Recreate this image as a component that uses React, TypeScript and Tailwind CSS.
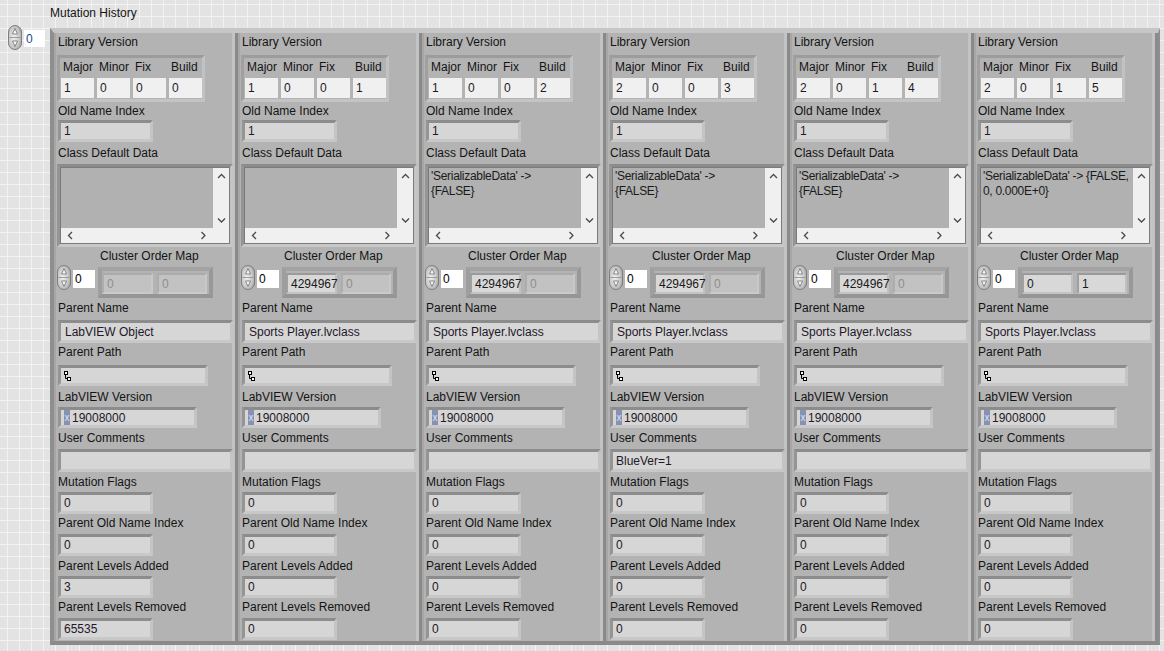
import React from 'react';

type Elem = { v: string; on: boolean };
type Entry = {
  ver: string[];
  data: string[];
  com: Elem[];
  parent: string;
  comments: string;
  added: string;
  removed: string;
};

const ENTRIES: Entry[] = [
  { ver: ['1', '0', '0', '0'], data: [], com: [{ v: '0', on: false }, { v: '0', on: false }], parent: 'LabVIEW Object', comments: '', added: '3', removed: '65535' },
  { ver: ['1', '0', '0', '1'], data: [], com: [{ v: '4294967', on: true }, { v: '0', on: false }], parent: 'Sports Player.lvclass', comments: '', added: '0', removed: '0' },
  { ver: ['1', '0', '0', '2'], data: ["'SerializableData' ->", '{FALSE}'], com: [{ v: '4294967', on: true }, { v: '0', on: false }], parent: 'Sports Player.lvclass', comments: '', added: '0', removed: '0' },
  { ver: ['2', '0', '0', '3'], data: ["'SerializableData' ->", '{FALSE}'], com: [{ v: '4294967', on: true }, { v: '0', on: false }], parent: 'Sports Player.lvclass', comments: 'BlueVer=1', added: '0', removed: '0' },
  { ver: ['2', '0', '1', '4'], data: ["'SerializableData' ->", '{FALSE}'], com: [{ v: '4294967', on: true }, { v: '0', on: false }], parent: 'Sports Player.lvclass', comments: '', added: '0', removed: '0' },
  { ver: ['2', '0', '1', '5'], data: ["'SerializableData' -> {FALSE,", '0, 0.000E+0}'], com: [{ v: '0', on: true }, { v: '1', on: true }], parent: 'Sports Player.lvclass', comments: '', added: '0', removed: '0' },
];

const bevel = 'border-[3px] border-t-[#8c8c8c] border-l-[#959595] border-r-[#c4c4c4] border-b-[#c8c8c8]';

function Spinner() {
  return (
    <svg width="14" height="25" viewBox="0 0 14 25" className="shrink-0">
      <defs>
        <radialGradient id="spin" cx="0.42" cy="0.5" r="0.75">
          <stop offset="0" stopColor="#f0f0f0" />
          <stop offset="0.6" stopColor="#c4c4c4" />
          <stop offset="1" stopColor="#858585" />
        </radialGradient>
      </defs>
      <rect x="0.5" y="0.5" width="13" height="24" rx="6.5" fill="url(#spin)" stroke="#7e7e7e" />
      <path d="M1.5 12.5 H12.5" stroke="#8a8a8a" strokeWidth="0.8" />
      <path d="M7 3.5 L9.5 9 L4.5 9 Z" fill="#f8f8f8" stroke="#6e6e6e" strokeWidth="0.8" />
      <path d="M7 21.5 L9.5 16 L4.5 16 Z" fill="#f8f8f8" stroke="#6e6e6e" strokeWidth="0.8" />
    </svg>
  );
}

function Chevron({ dir }: { dir: 'up' | 'down' | 'left' | 'right' }) {
  const d = {
    up: 'M1 5 L4.5 1.5 L8 5',
    down: 'M1 1.5 L4.5 5 L8 1.5',
    left: 'M5 1 L1.5 4.5 L5 8',
    right: 'M1.5 1 L5 4.5 L1.5 8',
  }[dir];
  const vertical = dir === 'up' || dir === 'down';
  return (
    <svg width={vertical ? 9 : 7} height={vertical ? 7 : 9} viewBox={vertical ? '0 0 9 7' : '0 0 7 9'}>
      <path d={d} fill="none" stroke="#4a4a4a" strokeWidth="1.3" />
    </svg>
  );
}

function Label({ children, className = '' }: { children: React.ReactNode; className?: string }) {
  return <div className={`h-[14px] leading-[14px] text-[12px] text-[#141414] whitespace-nowrap ${className}`}>{children}</div>;
}

function Box({ className = '', children }: { className?: string; children?: React.ReactNode }) {
  return (
    <div className={`${bevel} bg-[#d6d6d6] flex items-center pl-[3px] text-[12px] leading-[14px] text-[#1e1828] whitespace-nowrap overflow-hidden ${className}`}>
      {children}
    </div>
  );
}

function Column({ e }: { e: Entry }) {
  return (
    <div className="w-[184px] h-[608px] shrink-0 flex flex-col bg-[#b3b3b3] border-l-2 border-l-[#a6a6a6] border-r-[3px] border-r-[#8a8a8a] shadow-[inset_-3px_0_0_#c3c3c3] pl-[2px]">
      <Label className="mt-[2px]">Library Version</Label>
      <div className="mt-[6px] -ml-[1px] w-[148px] h-[47px] border-[3px] border-t-[#9c9c9c] border-l-[#a0a0a0] border-r-[#c2c2c2] border-b-[#c4c4c4] pl-[1px] pt-[2px]">
        <div className="flex gap-[3px] h-[14px] leading-[14px] text-[12px] text-[#141414]">
          {['Major', 'Minor', 'Fix', 'Build'].map((l) => (
            <div key={l} className="w-[33px] pl-[2px] whitespace-nowrap">{l}</div>
          ))}
        </div>
        <div className="flex gap-[3px] mt-[4px]">
          {e.ver.map((v, i) => (
            <div key={i} className="w-[33px] h-[20px] bg-[#f0f0f0] pl-[3px] flex items-center text-[12px] text-[#1e1828]">{v}</div>
          ))}
        </div>
      </div>

      <Label className="mt-[2px]">Old Name Index</Label>
      <Box className="mt-[2px] w-[95px] h-[22px]">1</Box>

      <Label className="mt-[4px]">Class Default Data</Label>
      <div className={`mt-[4px] -ml-[1px] w-[176px] h-[83px] ${bevel}`}>
        <div className="w-full h-full border border-[#7a7a7a] grid grid-cols-[1fr_16px] grid-rows-[1fr_15px]">
          <div className="bg-[#b1b1b1] pl-[2px] pt-[1px] text-[12px] leading-[15px] tracking-[-0.3px] text-[#1a1a1a] whitespace-nowrap overflow-hidden">
            {e.data.map((l, i) => (
              <div key={i}>{l}</div>
            ))}
          </div>
          <div className="bg-[#f0f0f0] flex flex-col items-center justify-between pt-[5px] pb-[4px]">
            <Chevron dir="up" />
            <Chevron dir="down" />
          </div>
          <div className="bg-[#f0f0f0] flex items-center justify-between px-[6px]">
            <Chevron dir="left" />
            <Chevron dir="right" />
          </div>
          <div className="bg-[#f0f0f0]" />
        </div>
      </div>

      <Label className="mt-[2px] pl-[42px]">Cluster Order Map</Label>
      <div className="mt-[2px] h-[33px] flex items-start">
        <div className="-ml-[1px]">
          <Spinner />
        </div>
        <div className="ml-[2px] mt-[5px] w-[22px] h-[18px] bg-white flex items-center pl-[2px] text-[12px] text-black">0</div>
        <div className="ml-[3px] mt-[2px] w-[115px] h-[31px] border-[4px] border-t-[#a3a3a3] border-l-[#9e9e9e] border-r-[#989898] border-b-[#959595] flex gap-[4px] pt-[2px]">
          {e.com.map((c, i) => (
            <div
              key={i}
              className={`${i === 0 ? 'w-[51px]' : 'w-[50px]'} h-[21px] flex items-center pl-[3px] text-[12px] whitespace-nowrap border-2 ${
                c.on
                  ? 'bg-[#d8d8d8] text-[#1a1a1a] border-t-[#9a9a9a] border-l-[#a0a0a0] border-r-[#c0c0c0] border-b-[#c4c4c4]'
                  : 'bg-[#c2c2c2] text-[#8e8e8e] border-t-[#ababab] border-l-[#adadad] border-r-[#c8c8c8] border-b-[#cacaca]'
              }`}
            >
              {c.v}
            </div>
          ))}
        </div>
      </div>

      <Label className="mt-[3px]">Parent Name</Label>
      <Box className="mt-[5px] w-[175px] h-[23px] pl-[4px]">{e.parent}</Box>

      <Label className="mt-[2px]">Parent Path</Label>
      <Box className="mt-[6px] w-[150px] h-[21px] pl-[1px]">
        <svg width="7" height="12" viewBox="0 0 7 12">
          <rect x="0.5" y="1.5" width="3" height="3" fill="#fff" stroke="#000" />
          <path d="M1.5 4.5 V8.5 H3.5" fill="none" stroke="#000" />
          <rect x="3.5" y="7.5" width="3" height="3" fill="#fff" stroke="#000" />
        </svg>
      </Box>

      <Label className="mt-[4px]">LabVIEW Version</Label>
      <Box className="mt-[3px] w-[139px] h-[21px] pl-0 items-stretch">
        <div className="w-[6px] bg-[#8592b2] flex items-center justify-center text-[10px] text-[#dde2f6]">x</div>
        <div className="ml-[2px] flex items-center">19008000</div>
      </Box>

      <Label className="mt-[3px]">User Comments</Label>
      <Box className="mt-[4px] w-[175px] h-[23px]">{e.comments}</Box>

      <Label className="mt-[3px]">Mutation Flags</Label>
      <Box className="mt-[3px] w-[95px] h-[22px]">0</Box>

      <Label className="mt-[2px]">Parent Old Name Index</Label>
      <Box className="mt-[4px] w-[95px] h-[22px]">0</Box>

      <Label className="mt-[3px]">Parent Levels Added</Label>
      <Box className="mt-[3px] w-[95px] h-[22px]">{e.added}</Box>

      <Label className="mt-[2px]">Parent Levels Removed</Label>
      <Box className="mt-[4px] w-[95px] h-[22px]">{e.removed}</Box>
    </div>
  );
}

export default function App() {
  return (
    <div className="w-[1164px] h-[651px] overflow-hidden bg-[#e3e3e3] bg-[linear-gradient(to_right,#f2f2f2_1px,transparent_1px),linear-gradient(to_bottom,#f2f2f2_1px,transparent_1px)] bg-[length:12px_12px] bg-[position:7px_4px] font-['Liberation_Sans',Arial,sans-serif]">
      <div className="h-[20px] pt-[6px] pl-[50px] text-[12px] leading-[14px] text-[#141414]">Mutation History</div>
      <div className="mt-[5px] flex items-start">
        <div className="w-[50px] shrink-0 flex items-start pl-[8px]">
          <Spinner />
          <div className="ml-[2px] mt-[5px] w-[21px] h-[17px] bg-white flex items-center pl-[2px] text-[12px] text-[#1a4a9a]">0</div>
        </div>
        <div className="mt-[3px] flex border-t-[5px] border-t-[#c6c6c6] border-l-[4px] border-l-[#8e8e8e] border-r-[2px] border-r-[#8e8e8e] border-b-[4px] border-b-[#8a8a8a]">
          {ENTRIES.map((e, i) => (
            <Column key={i} e={e} />
          ))}
        </div>
      </div>
    </div>
  );
}
